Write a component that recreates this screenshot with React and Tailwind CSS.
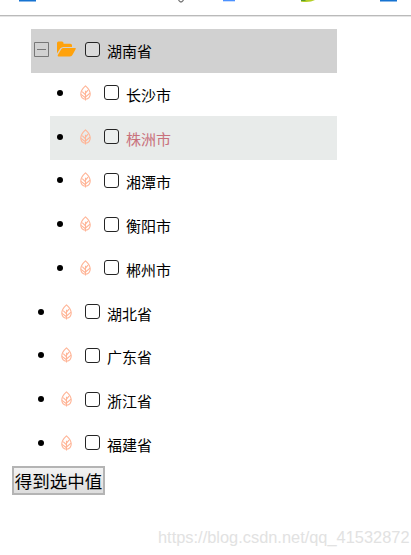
import { useState } from "react";

const provinces = [
    { name: "湖南省", children: ["长沙市", "株洲市", "湘潭市", "衡阳市", "郴州市"] },
    { name: "湖北省" },
    { name: "广东省" },
    { name: "浙江省" },
    { name: "福建省" },
];

function LeafIcon() {
    return (
        <svg className="w-[11px] h-[16px] shrink-0" viewBox="0 0 11 16" fill="none" stroke="#ffb496" strokeWidth="1.1" strokeLinejoin="round">
            <path d="M5.5 .8C3.2 2.8 .8 5.3 .8 9c0 3 1.8 4.9 4.7 5.2 2.9-.3 4.7-2.2 4.7-5.2 0-3.7-2.4-6.2-4.7-8.2z" />
            <path d="M5.5 15.5V5.8M5.5 8.2L8 5.2M5.5 12L10 8.2M5.5 9.8L2.2 6.6M5.5 12.8L1 9.4" />
        </svg>
    );
}

function FolderIcon() {
    return (
        <svg className="w-[19px] h-[16px] shrink-0" viewBox="0 0 19 16" fill="#ffa20c">
            <path d="M0 12.5V2Q0 .5 1.5 .5H5Q6.5 .5 6.5 2V2.7H13.3Q15 2.7 15 4.3V5.9H6.3Q4.4 5.9 3.2 7.5z" />
            <path d="M.8 14.1L4.2 8.3Q5 6.9 6.5 6.9H18Q19.3 6.9 18.7 8.1L15.7 13.5Q14.8 15.4 13 15.4H1.5Q.4 15.4 .8 14.1z" />
        </svg>
    );
}

function MinusIcon() {
    return (
        <svg className="w-[15px] h-[15px] shrink-0" viewBox="0 0 15 15" fill="none" stroke="#777777">
            <path d="M.5 .5h14v14H.5z" />
            <path d="M3 7.5h9" />
        </svg>
    );
}

function Checkbox() {
    return (
        <input type="checkbox" className="appearance-none w-[15px] h-[15px] shrink-0 rounded-[3px] border-[1.5px] border-[#242424] bg-white/20 checked:bg-gray-700" />
    );
}

function TreeLeaf({ name, active }) {
    return (
        <li className={`flex items-center h-[43.75px] pl-[7px] pb-[3px] ${active ? "bg-[#e8ebea] text-[#c9717c]" : ""}`}>
            <span className="w-[6px] h-[6px] rounded-full bg-black shrink-0 mr-[17px]" />
            <LeafIcon />
            <label className="flex items-center ml-[13px]">
                <Checkbox />
                <span className="ml-[7px] mt-[3px]">{name}</span>
            </label>
        </li>
    );
}

function App() {
    const [open, setOpen] = useState(true);

    return (
        <div className="relative w-full h-[555px] overflow-hidden bg-white text-black font-['Noto_Sans_CJK_SC',sans-serif]">
            {/* Bottom edge of the browser bookmarks bar */}
            <svg className="block w-full h-[17px]" viewBox="0 0 411 17">
                <path d="M19 0h17v1.5H19zM380 0h17v1.5H380z" fill="#1673d1" />
                <path d="M178.5 0q2.5 4 5 0" fill="none" stroke="#777777" strokeWidth="1.3" />
                <path d="M223 0h12v1.3H223z" fill="#4b91ff" />
                <path d="M301 0h14q-5 3-14 1.7z" fill="#b5cf27" />
                <path d="M301 0h5l-1 1h-4z" fill="#599b30" />
                <path d="M0 15h411v1H0z" fill="#bababa" />
                <path d="M0 16h411v1H0z" fill="#e5e5e5" />
            </svg>

            {/* Province tree */}
            <ul className="mt-[12px] ml-[31px] w-[306px] text-[15px] leading-none whitespace-nowrap">
                {provinces.map((province) =>
                    province.children ? (
                        <li key={province.name}>
                            <div className="flex items-center h-[43.5px] pl-[3px] pb-[3px] bg-[#d1d1d1]">
                                <button onClick={() => setOpen(!open)} className="mr-[8px]">
                                    <MinusIcon />
                                </button>
                                <FolderIcon />
                                <label className="flex items-center ml-[9px]">
                                    <Checkbox />
                                    <span className="ml-[7px] mt-[3px]">{province.name}</span>
                                </label>
                            </div>
                            {open && (
                                <ul className="ml-[19px]">
                                    {province.children.map((city) => (
                                        <TreeLeaf key={city} name={city} active={city === "株洲市"} />
                                    ))}
                                </ul>
                            )}
                        </li>
                    ) : (
                        <TreeLeaf key={province.name} name={province.name} />
                    )
                )}
            </ul>

            <button className="block ml-[12px] w-[93px] h-[29px] border-2 border-[#b4b4b4] bg-linear-to-b from-[#f3f3f3] to-[#dddddd] text-[17.5px] leading-none whitespace-nowrap">
                <span className="flex justify-center">得到选中值</span>
            </button>

            <span className="absolute left-[158px] top-[527px] text-[16.4px] leading-[20px] text-[#e2e2e2] font-['Liberation_Sans',sans-serif]">
                https://blog.csdn.net/qq_41532872
            </span>
        </div>
    );
}

export default App;
